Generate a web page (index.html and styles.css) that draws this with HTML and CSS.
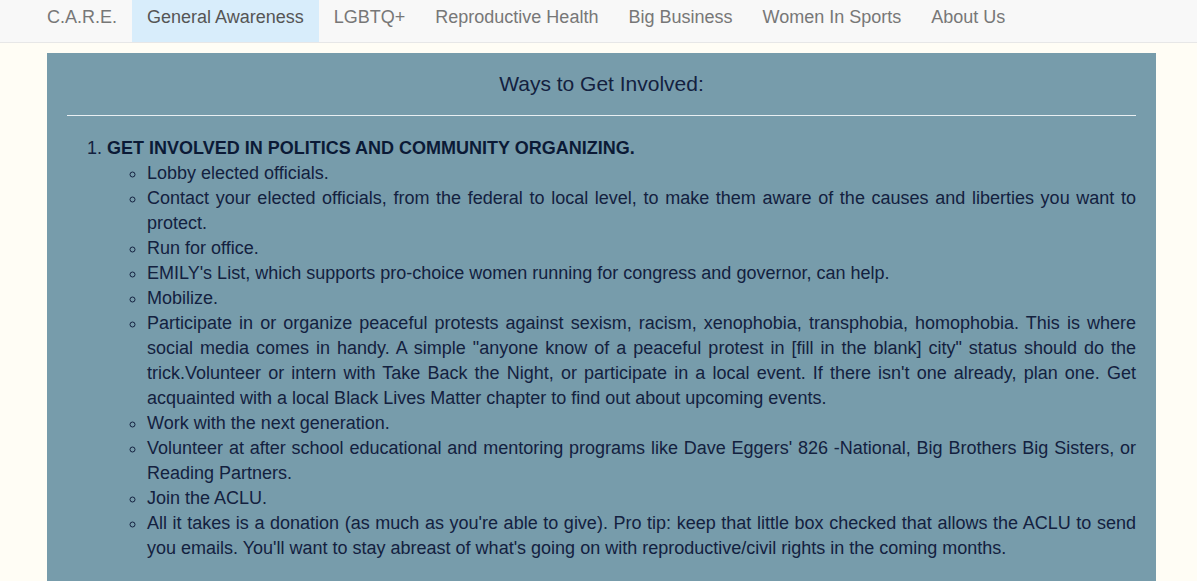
FILE: index.html
```html
<!DOCTYPE html>
<html lang="en">
<head>
<meta charset="utf-8">
<title>General Awareness</title>
<link rel="stylesheet" href="styles.css">
</head>
<body>
<nav class="navbar">
  <ul class="nav">
    <li><a href="#">C.A.R.E.</a></li>
    <li class="active"><a href="#">General Awareness</a></li>
    <li><a href="#">LGBTQ+</a></li>
    <li><a href="#">Reproductive Health</a></li>
    <li><a href="#">Big Business</a></li>
    <li><a href="#">Women In Sports</a></li>
    <li><a href="#">About Us</a></li>
  </ul>
</nav>
<main class="panel">
  <h3 class="panel-title">Ways to Get Involved:</h3>
  <hr class="rule">
  <ol class="steps">
    <li><strong>GET INVOLVED IN POLITICS AND COMMUNITY ORGANIZING.</strong>
      <ul class="sub">
        <li>Lobby elected officials.</li>
        <li>Contact your elected officials, from the federal to local level, to make them aware of the causes and liberties you want to protect.</li>
        <li>Run for office.</li>
        <li>EMILY's List, which supports pro-choice women running for congress and governor, can help.</li>
        <li>Mobilize.</li>
        <li>Participate in or organize peaceful protests against sexism, racism, xenophobia, transphobia, homophobia. This is where social media comes in handy. A simple "anyone know of a peaceful protest in [fill in the blank] city" status should do the trick.Volunteer or intern with Take Back the Night, or participate in a local event. If there isn't one already, plan one. Get acquainted with a local Black Lives Matter chapter to find out about upcoming events.</li>
        <li>Work with the next generation.</li>
        <li>Volunteer at after school educational and mentoring programs like Dave Eggers' 826 -National, Big Brothers Big Sisters, or Reading Partners.</li>
        <li>Join the ACLU.</li>
        <li>All it takes is a donation (as much as you're able to give). Pro tip: keep that little box checked that allows the ACLU to send you emails. You'll want to stay abreast of what's going on with reproductive/civil rights in the coming months.</li>
      </ul>
    </li>
  </ol>
</main>
</body>
</html>
```
FILE: styles.css
```css
html, body {
  margin: 0;
  padding: 0;
}
body {
  background: #fffdf5;
  font-family: "Liberation Sans", Arial, sans-serif;
  font-size: 18px;
  color: #13213f;
}
.navbar {
  background: #f8f8f8;
  border-bottom: 1px solid #e7e7e7;
  height: 43px;
  box-sizing: border-box;
}
.nav {
  list-style: none;
  margin: 0;
  padding: 0 0 0 32px;
  display: flex;
}
.nav a {
  display: block;
  padding: 6px 15px 14px;
  height: 42px;
  box-sizing: border-box;
  line-height: 22px;
  font-size: 18px;
  color: #777777;
  text-decoration: none;
}
.nav .active a {
  background: #d8edfb;
  color: #555555;
}
.panel {
  margin: 10px 41px 0 47px;
  background: #779cab;
  padding: 20px 20px 30px;
}
.panel-title {
  margin: 0;
  text-align: center;
  font-size: 21px;
  font-weight: normal;
  line-height: 22px;
  color: #13213f;
}
.rule {
  margin: 20px 0 20px;
  border: 0;
  border-top: 1px solid #e9eff2;
  height: 0;
}
.steps {
  margin: 0;
  padding-left: 40px;
  line-height: 25px;
  text-align: justify;
}
.steps strong {
  color: #0b1a36;
}
.sub {
  margin: 0;
  padding-left: 40px;
  list-style-type: circle;
}
```
